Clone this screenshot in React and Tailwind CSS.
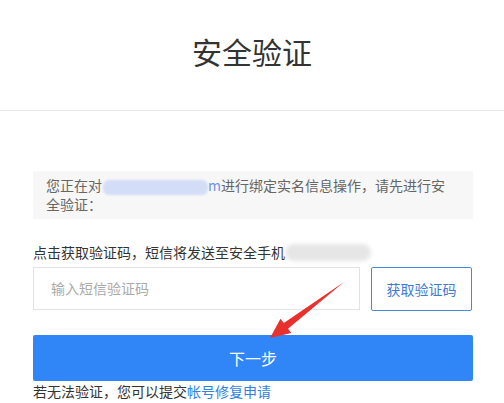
export default function App() {
  return (
    <div
      className="relative w-[504px] h-[403px] bg-white overflow-hidden"
      style={{ fontFamily: '"Noto Sans CJK SC", "Noto Sans", sans-serif' }}
    >
      <div className="h-[111px] border-b border-[#e8e8e8] flex items-center justify-center">
        <h1 className="text-[30px] leading-none text-[#333] mb-[9px]">安全验证</h1>
      </div>
      <div className="px-[33px] pr-[31px]">
        <div className="mt-[60px] bg-[#f7f7f7] py-[5px] pl-[13px] pr-[20px] text-[14px] leading-[19px] text-[#666]">
          您正在对
          <span className="inline-block align-middle w-[105px] h-[15px] ml-[1px] rounded-[6px] bg-[#d4ddf7] blur-[1px]"></span>
          <span className="text-[#6f93e6]">m</span>
          进行绑定实名信息操作，请先进行安全验证：
        </div>
        <div className="mt-[24px] text-[14px] leading-[18px] text-[#333] flex items-center">
          <span>点击获取验证码，短信将发送至安全手机</span>
          <span className="inline-block w-[86px] h-[17px] rounded-full bg-[#e6e6e6] blur-[2px]"></span>
        </div>
        <div className="mt-[6px] flex gap-[11px]">
          <div className="w-[327px] h-[43px] border border-[#e3e3e3] flex items-center pl-[17px] text-[14px] text-[#aaa]">
            输入短信验证码
          </div>
          <button className="w-[101px] h-[44px] border border-[#4b87d8] rounded-[2px] text-[14px] text-[#3f7ad3] bg-white">
            获取验证码
          </button>
        </div>
        <button className="mt-[24px] w-full h-[46px] rounded-[2px] bg-[#3086f7] text-white text-[16px]">
          下一步
        </button>
        <div className="mt-[1px] text-[14px] leading-[18px] text-[#333]">
          若无法验证，您可以提交<span className="text-[#2f7fe6]">帐号修复申请</span>
        </div>
      </div>
      <svg className="absolute left-0 top-0 pointer-events-none" width="504" height="403">
        <path
          d="M 344 282 L 288.0 328.7 L 291.3 333.1 L 270 338 L 280.5 318.7 L 283.8 323.1 Z"
          fill="#e8312d"
        />
      </svg>
    </div>
  );
}
